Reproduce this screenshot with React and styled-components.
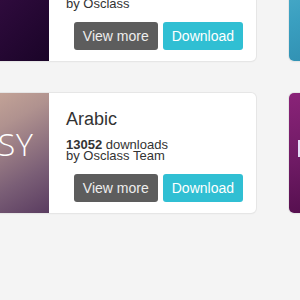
import React from "react";
import styled, { createGlobalStyle } from "styled-components";

const Global = createGlobalStyle`
  html, body { margin: 0; padding: 0; background: #f4f4f4; overflow: hidden; }
  body { font-family: "Liberation Sans", Arial, sans-serif; color: #333; }
`;

const Viewport = styled.div`
  width: 300px;
  height: 300px;
  overflow: hidden;
  background: #f4f4f4;
`;

const Grid = styled.div`
  display: grid;
  grid-template-columns: 327px 327px;
  grid-auto-rows: 120px;
  column-gap: 33px;
  row-gap: 32px;
  margin-left: -71px;
  margin-top: -59px;
`;

const Card = styled.div`
  display: flex;
  background: #fff;
  border-radius: 5px;
  overflow: hidden;
  box-shadow: 0 0 0 1px #e6e6e6, 0 1px 2px rgba(0, 0, 0, 0.05);
`;

const Thumb = styled.div`
  position: relative;
  flex: 0 0 120px;
  background: ${(p) => p.$bg};
  display: flex;
  align-items: flex-start;
  justify-content: flex-end;
  overflow: hidden;
`;

const ThumbText = styled.span`
  font-family: "Open Sans", sans-serif;
  font-weight: 300;
  font-size: 32px;
  line-height: 44px;
  color: #fff;
  letter-spacing: 1px;
  padding-right: 15px;
  margin-top: 29px;
  white-space: nowrap;
`;

const Mark = styled.span`
  position: absolute;
  left: ${(p) => p.$x}px;
  top: ${(p) => p.$y}px;
  width: ${(p) => p.$w}px;
  height: ${(p) => p.$h}px;
  background: ${(p) => p.$c};
`;

const Body = styled.div`
  flex: 1;
  display: flex;
  flex-direction: column;
  padding: 16px 13px 11px 17px;
  min-width: 0;
`;

const Title = styled.div`
  font-size: 18px;
  line-height: 21px;
  color: #333;
`;

const Meta = styled.div`
  margin-top: 9px;
  font-size: 13px;
  line-height: 11px;
  color: #333;
  b { font-weight: bold; }
`;

const Actions = styled.div`
  margin-top: auto;
  display: flex;
  justify-content: flex-end;
  gap: 5px;
`;

const Button = styled.button`
  height: 28px;
  padding: 0 9px;
  border: none;
  border-radius: 3px;
  font-family: "Liberation Sans", Arial, sans-serif;
  font-size: 14px;
  color: ${(p) => (p.$primary ? "#fff" : "#eee")};
  background: ${(p) => (p.$primary ? "#30bfd3" : "#5d5d5d")};
  cursor: pointer;
`;

const items = [
  {
    title: "Theme",
    downloads: "9000",
    by: "Osclass",
    bg: "linear-gradient(135deg, #4a1450 0%, #2c0a3a 60%, #1a0428 100%)",
    marks: [{ x: 81, y: 52, w: 3, h: 7, c: "#f4f4ff" }],
  },
  {
    title: "Other",
    downloads: "8000",
    by: "Osclass",
    bg: "linear-gradient(160deg, #5ab8d2 0%, #3a9fc0 50%, #2a86a8 100%)",
    marks: [],
  },
  {
    title: "Arabic",
    downloads: "13052",
    by: "Osclass Team",
    bg: "linear-gradient(150deg, #d8b6a0 0%, #b0928f 40%, #7a5e76 75%, #5a3c60 100%)",
    text: "EASY",
    marks: [],
  },
  {
    title: "Other",
    downloads: "7000",
    by: "Osclass",
    bg: "linear-gradient(170deg, #8a2378 0%, #6e1a64 50%, #4e0c48 100%)",
    marks: [{ x: 9, y: 47, w: 4, h: 17, c: "#e6dcf8" }],
  },
];

export default function App() {
  return (
    <Viewport>
      <Global />
      <Grid>
        {items.map((it, i) => (
          <Card key={i}>
            <Thumb $bg={it.bg}>
              {it.text && <ThumbText>{it.text}</ThumbText>}
              {it.marks.map((m, j) => (
                <Mark key={j} $x={m.x} $y={m.y} $w={m.w} $h={m.h} $c={m.c} />
              ))}
            </Thumb>
            <Body>
              <Title>{it.title}</Title>
              <Meta>
                <b>{it.downloads}</b> downloads
                <br />
                by {it.by}
              </Meta>
              <Actions>
                <Button>View more</Button>
                <Button $primary>Download</Button>
              </Actions>
            </Body>
          </Card>
        ))}
      </Grid>
    </Viewport>
  );
}
